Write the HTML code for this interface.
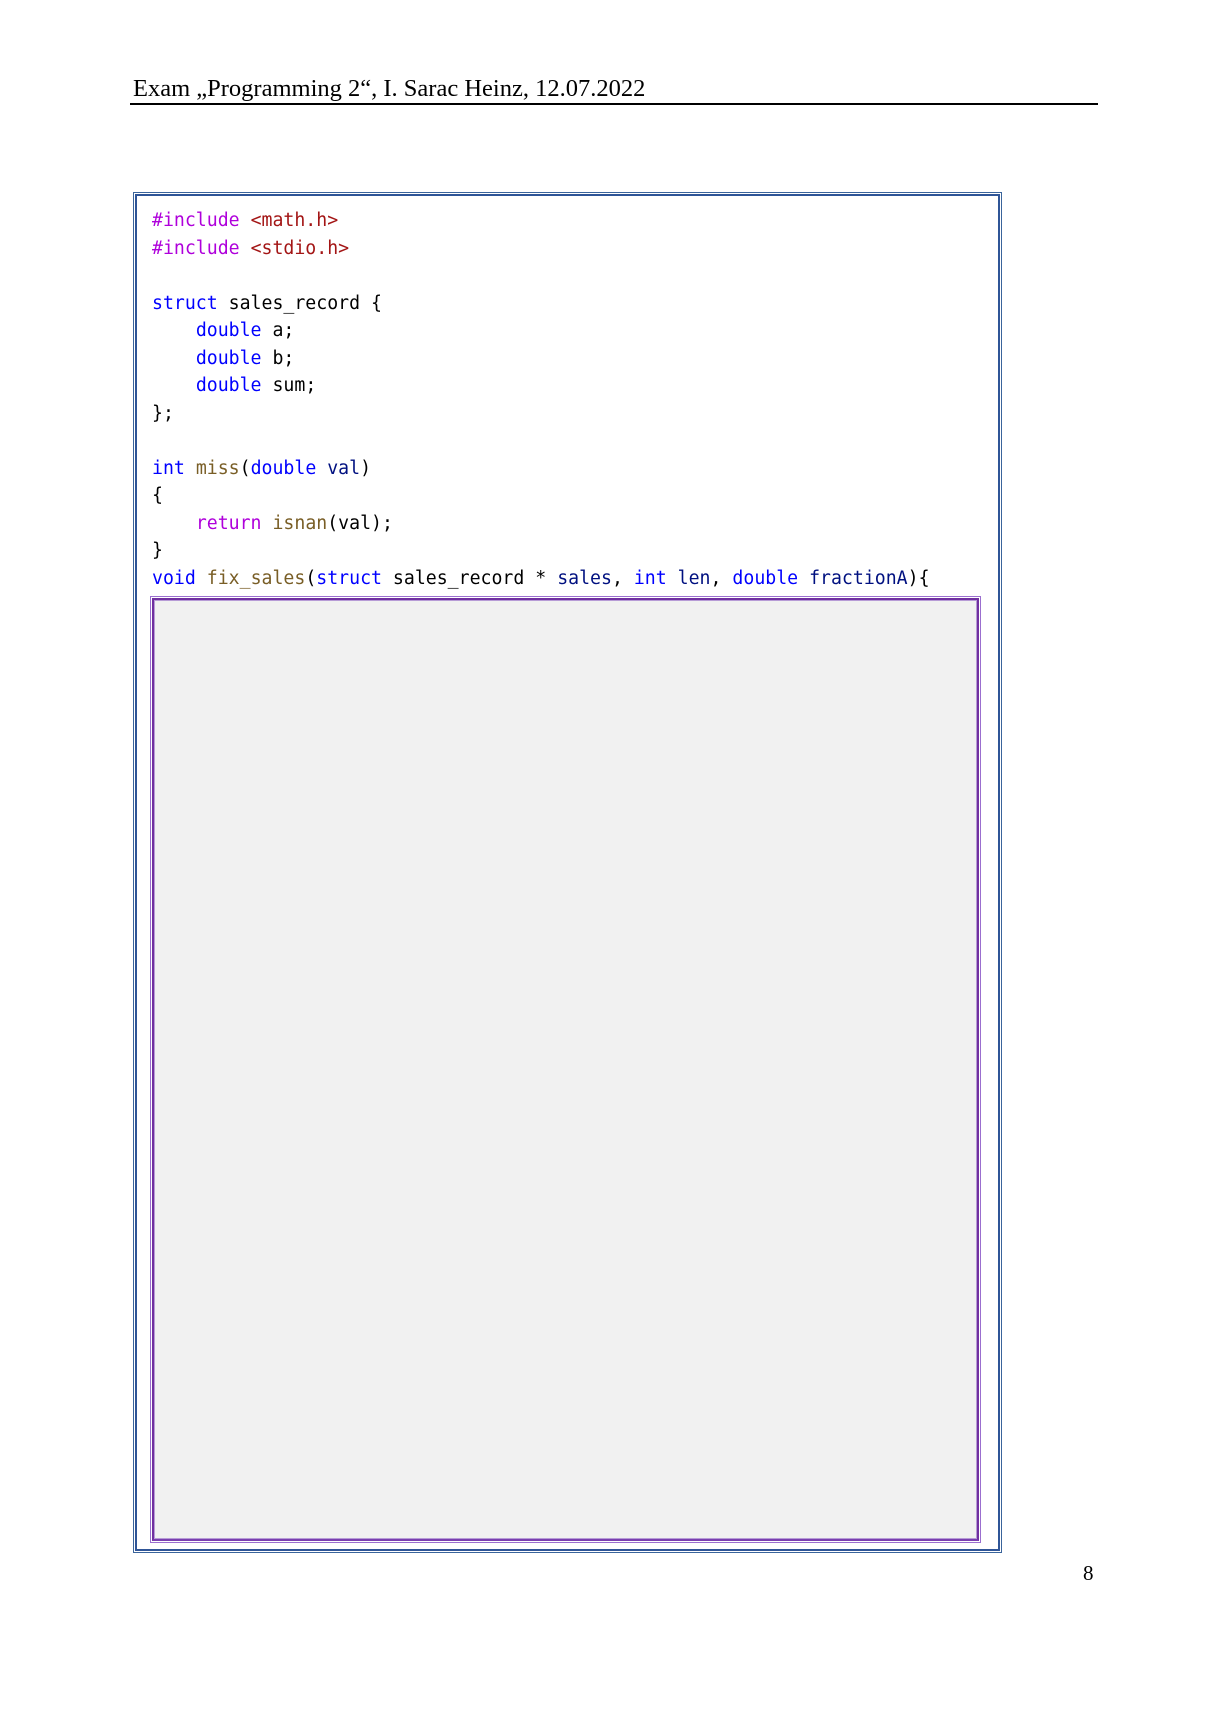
<!DOCTYPE html>
<html><head><meta charset="utf-8">
<style>
html,body{margin:0;padding:0;background:#fff;}
body{width:1209px;height:1710px;position:relative;overflow:hidden;}
.hdr{position:absolute;left:133px;top:74px;font-family:"Liberation Serif",serif;font-size:24.5px;color:#000;white-space:nowrap;line-height:30px;}
.rule{position:absolute;left:130px;top:103px;width:968px;height:1.5px;background:#000;}
.ob{position:absolute;left:133px;top:192px;width:867px;height:1359px;border:1px solid #3a649b;}
.ob2{position:absolute;left:1px;top:1px;right:1px;bottom:1px;border:2px solid #2f5597;}
.code{position:absolute;left:152px;top:207px;font-family:"DejaVu Sans Mono","Liberation Mono",monospace;font-size:18.2px;line-height:27.5px;white-space:pre;color:#000;}
.k{color:#0000ff}.p{color:#af00db}.s{color:#a31515}.f{color:#795e26}.v{color:#001080}
.ib{position:absolute;left:150px;top:596px;width:829px;height:945px;border:1px solid #9b6fcf;}
.ib2{position:absolute;left:1px;top:1px;right:1px;bottom:1px;border:2px solid #7030a0;border-bottom-color:#7a3fb0;}
.ib3{position:absolute;left:0;top:0;right:0;bottom:0;border:1px solid #b79bd6;background:#f1f1f1;}
.pn{position:absolute;left:1083px;top:1561px;font-family:"Liberation Serif",serif;font-size:21px;}
</style></head><body>
<div class="hdr">Exam „Programming 2“, I. Sarac Heinz, 12.07.2022</div>
<div class="rule"></div>
<div class="ob"><div class="ob2"></div></div>
<div class="code"><span class="p">#include</span> <span class="s">&lt;math.h&gt;</span>
<span class="p">#include</span> <span class="s">&lt;stdio.h&gt;</span>

<span class="k">struct</span> sales_record {
    <span class="k">double</span> a;
    <span class="k">double</span> b;
    <span class="k">double</span> sum;
};

<span class="k">int</span> <span class="f">miss</span>(<span class="k">double</span> <span class="v">val</span>)
{
    <span class="p">return</span> <span class="f">isnan</span>(val);
}
<span class="k">void</span> <span class="f">fix_sales</span>(<span class="k">struct</span> sales_record * <span class="v">sales</span>, <span class="k">int</span> <span class="v">len</span>, <span class="k">double</span> <span class="v">fractionA</span>){</div>
<div class="ib"><div class="ib2"><div class="ib3"></div></div></div>
<div class="pn">8</div>
</body></html>
